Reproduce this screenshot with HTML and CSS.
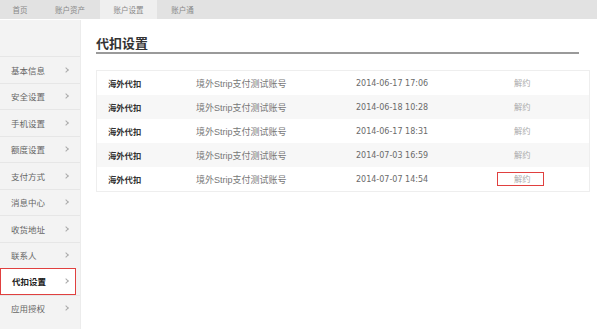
FILE: index.html
```html
<!DOCTYPE html>
<html lang="zh">
<head>
    <meta charset="UTF-8">
    <title>代扣设置</title>
    <link rel="stylesheet" href="styles.css">
</head>
<body>
    <div class="topbar">
        <a class="tab tab-home">首页</a>
        <a class="tab tab-assets">账户资产</a>
        <a class="tab active">账户设置</a>
        <a class="tab tab-pass">账户通</a>
    </div>

    <div class="page">
        <ul class="sidebar">
            <li><span>基本信息</span><i></i></li>
            <li><span>安全设置</span><i></i></li>
            <li><span>手机设置</span><i></i></li>
            <li><span>额度设置</span><i></i></li>
            <li><span>支付方式</span><i></i></li>
            <li><span>消息中心</span><i></i></li>
            <li><span>收货地址</span><i></i></li>
            <li><span>联系人</span><i></i></li>
            <li class="current"><span>代扣设置</span><i></i></li>
            <li><span>应用授权</span><i></i></li>
        </ul>

        <div class="main">
            <h2>代扣设置</h2>
            <table class="deduct-table">
                <tr>
                    <td class="name">海外代扣</td>
                    <td class="account">境外Strip支付测试账号</td>
                    <td class="date">2014-06-17 17:06</td>
                    <td class="op"><a>解约</a></td>
                </tr>
                <tr>
                    <td class="name">海外代扣</td>
                    <td class="account">境外Strip支付测试账号</td>
                    <td class="date">2014-06-18 10:28</td>
                    <td class="op"><a>解约</a></td>
                </tr>
                <tr>
                    <td class="name">海外代扣</td>
                    <td class="account">境外Strip支付测试账号</td>
                    <td class="date">2014-06-17 18:31</td>
                    <td class="op"><a>解约</a></td>
                </tr>
                <tr>
                    <td class="name">海外代扣</td>
                    <td class="account">境外Strip支付测试账号</td>
                    <td class="date">2014-07-03 16:59</td>
                    <td class="op"><a>解约</a></td>
                </tr>
                <tr>
                    <td class="name">海外代扣</td>
                    <td class="account">境外Strip支付测试账号</td>
                    <td class="date">2014-07-07 14:54</td>
                    <td class="op"><a class="marked">解约</a></td>
                </tr>
            </table>
        </div>
    </div>
</body>
</html>
```

FILE: styles.css
```css
body {
    margin: 0;
    background: #ffffff;
    font-family: "Liberation Sans", "Noto Sans CJK SC", sans-serif;
    color: #666;
    font-size: 9px;
}

/* top tabs */
.topbar {
    width: 597px;
    height: 19px;
    background: #e2e2e2;
    display: flex;
    align-items: stretch;
}

.tab {
    display: flex;
    align-items: center;
    justify-content: center;
    color: #888;
    font-size: 7.5px;
}

.tab-home { width: 40px; }
.tab-assets { width: 60px; }
.tab-pass { width: 49px; margin-left: 1px; }

.tab.active {
    width: 57px;
    background: #efefef;
}

.page {
    display: flex;
    margin-top: 1px;
}

/* left menu */
.sidebar {
    flex-shrink: 0;
    list-style: none;
    margin: 0;
    padding: 36px 0 8px;
    width: 81px;
    background: #f3f3f3;
    border-right: 1px solid #ececec;
    box-sizing: border-box;
}

.sidebar li {
    height: 26.5px;
    border-top: 1px solid #e6e6e6;
    box-sizing: border-box;
    display: flex;
    align-items: center;
    justify-content: space-between;
    padding: 0 12px 0 11px;
    font-size: 8.5px;
    color: #666;
}

/* small chevron */
.sidebar li i {
    width: 3px;
    height: 3px;
    border-top: 1px solid #aaa;
    border-right: 1px solid #aaa;
    transform: rotate(45deg);
}

.sidebar li.current {
    background: #fff;
    color: #222;
    font-weight: bold;
    border: 1px solid #e0403f;
    width: 76px;
    padding-right: 7px;
}

/* content */
.main {
    flex: 1;
    padding: 16px 0 0 15px;
}

.main h2 {
    margin: 0 0 16px;
    font-size: 13px;
    line-height: 15px;
    color: #333;
    font-weight: bold;
    padding-bottom: 1px;
    border-bottom: 2px solid #9a9a9a;
    width: 483px;
}

.deduct-table {
    width: 494px;
    border-collapse: collapse;
    border: 1px solid #eeeeee;
}

.deduct-table td {
    height: 24px;
    padding: 0;
    font-size: 8.3px;
    color: #777;
}

.deduct-table tr:nth-child(even) {
    background: #f7f7f7;
}

.deduct-table .name {
    padding-left: 11px;
    width: 88px;
    color: #333;
    font-weight: bold;
}

.deduct-table .account {
    width: 160px;
    font-size: 9px;
}

.deduct-table .date {
    width: 141px;
    color: #6a6a6a;
    font-family: "DejaVu Sans", sans-serif;
    font-size: 8px;
}

.deduct-table .op a {
    display: inline-block;
    height: 12px;
    line-height: 12px;
    padding: 0 12px 0 16px;
    border: 1px solid transparent;
    color: #aaa;
}

.deduct-table .op a.marked {
    border: 1px solid #e0403f;
}
```
